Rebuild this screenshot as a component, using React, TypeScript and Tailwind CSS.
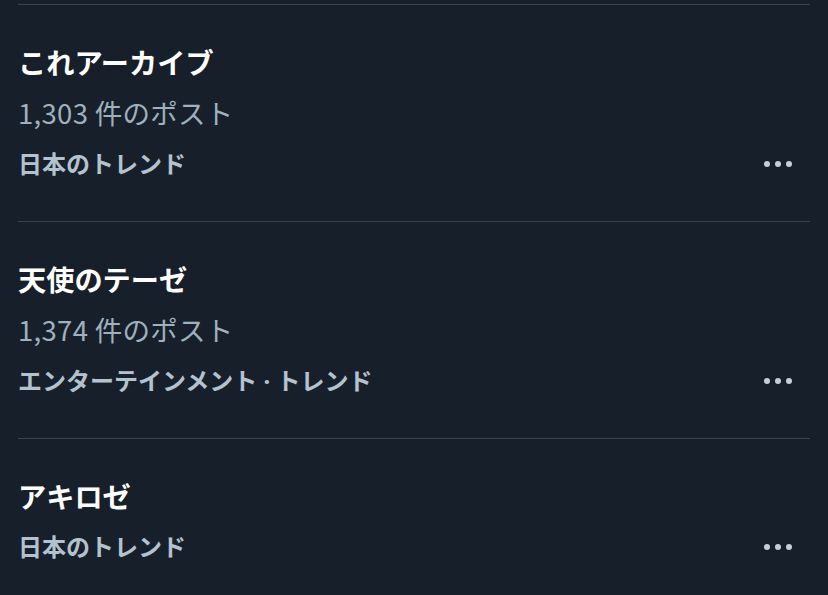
import React from 'react'

type Trend = {
  title: string
  posts?: string
  category: string[]
}

const trends: Trend[] = [
  { title: 'これアーカイブ', posts: '1,303 件のポスト', category: ['日本のトレンド'] },
  { title: '天使のテーゼ', posts: '1,374 件のポスト', category: ['エンターテインメント', 'トレンド'] },
  { title: 'アキロゼ', category: ['日本のトレンド'] },
]

function MoreDots() {
  return (
    <svg width="28" height="8" viewBox="0 0 28 8" className="shrink-0">
      <circle cx="3" cy="4" r="3" fill="#c3cfd9" />
      <circle cx="14" cy="4" r="3" fill="#c3cfd9" />
      <circle cx="25" cy="4" r="3" fill="#c3cfd9" />
    </svg>
  )
}

function TrendRow({ trend }: { trend: Trend }) {
  return (
    <div className="border-t border-[#38444d] pt-[32px] pb-[33px]">
      <div className="h-[50px] flex items-center text-[28.2px] font-bold text-white leading-none">
        {trend.title}
      </div>
      {trend.posts && (
        <div className="h-[51px] flex items-center text-[27.5px] text-[#9fb0be] leading-none tracking-[0.3px]">
          {trend.posts}
        </div>
      )}
      <div className="h-[50px] flex items-center justify-between">
        <span className="text-[24px] font-semibold text-[#b3c2ce] leading-none">
          {trend.category.map((c, i) => (
            <React.Fragment key={c}>
              {i > 0 && <span className="font-['Noto_Sans'] font-bold"> · </span>}
              {c}
            </React.Fragment>
          ))}
        </span>
        <div className="mr-[18px] mt-[2px]">
          <MoreDots />
        </div>
      </div>
    </div>
  )
}

export default function App() {
  return (
    <div
      className="w-[828px] h-[595px] overflow-hidden bg-[#17202a] pt-[4px] px-[18px]"
      style={{ fontFamily: '"Noto Sans CJK JP", "Noto Sans", sans-serif' }}
    >
      {trends.map((t) => (
        <TrendRow key={t.title} trend={t} />
      ))}
    </div>
  )
}
